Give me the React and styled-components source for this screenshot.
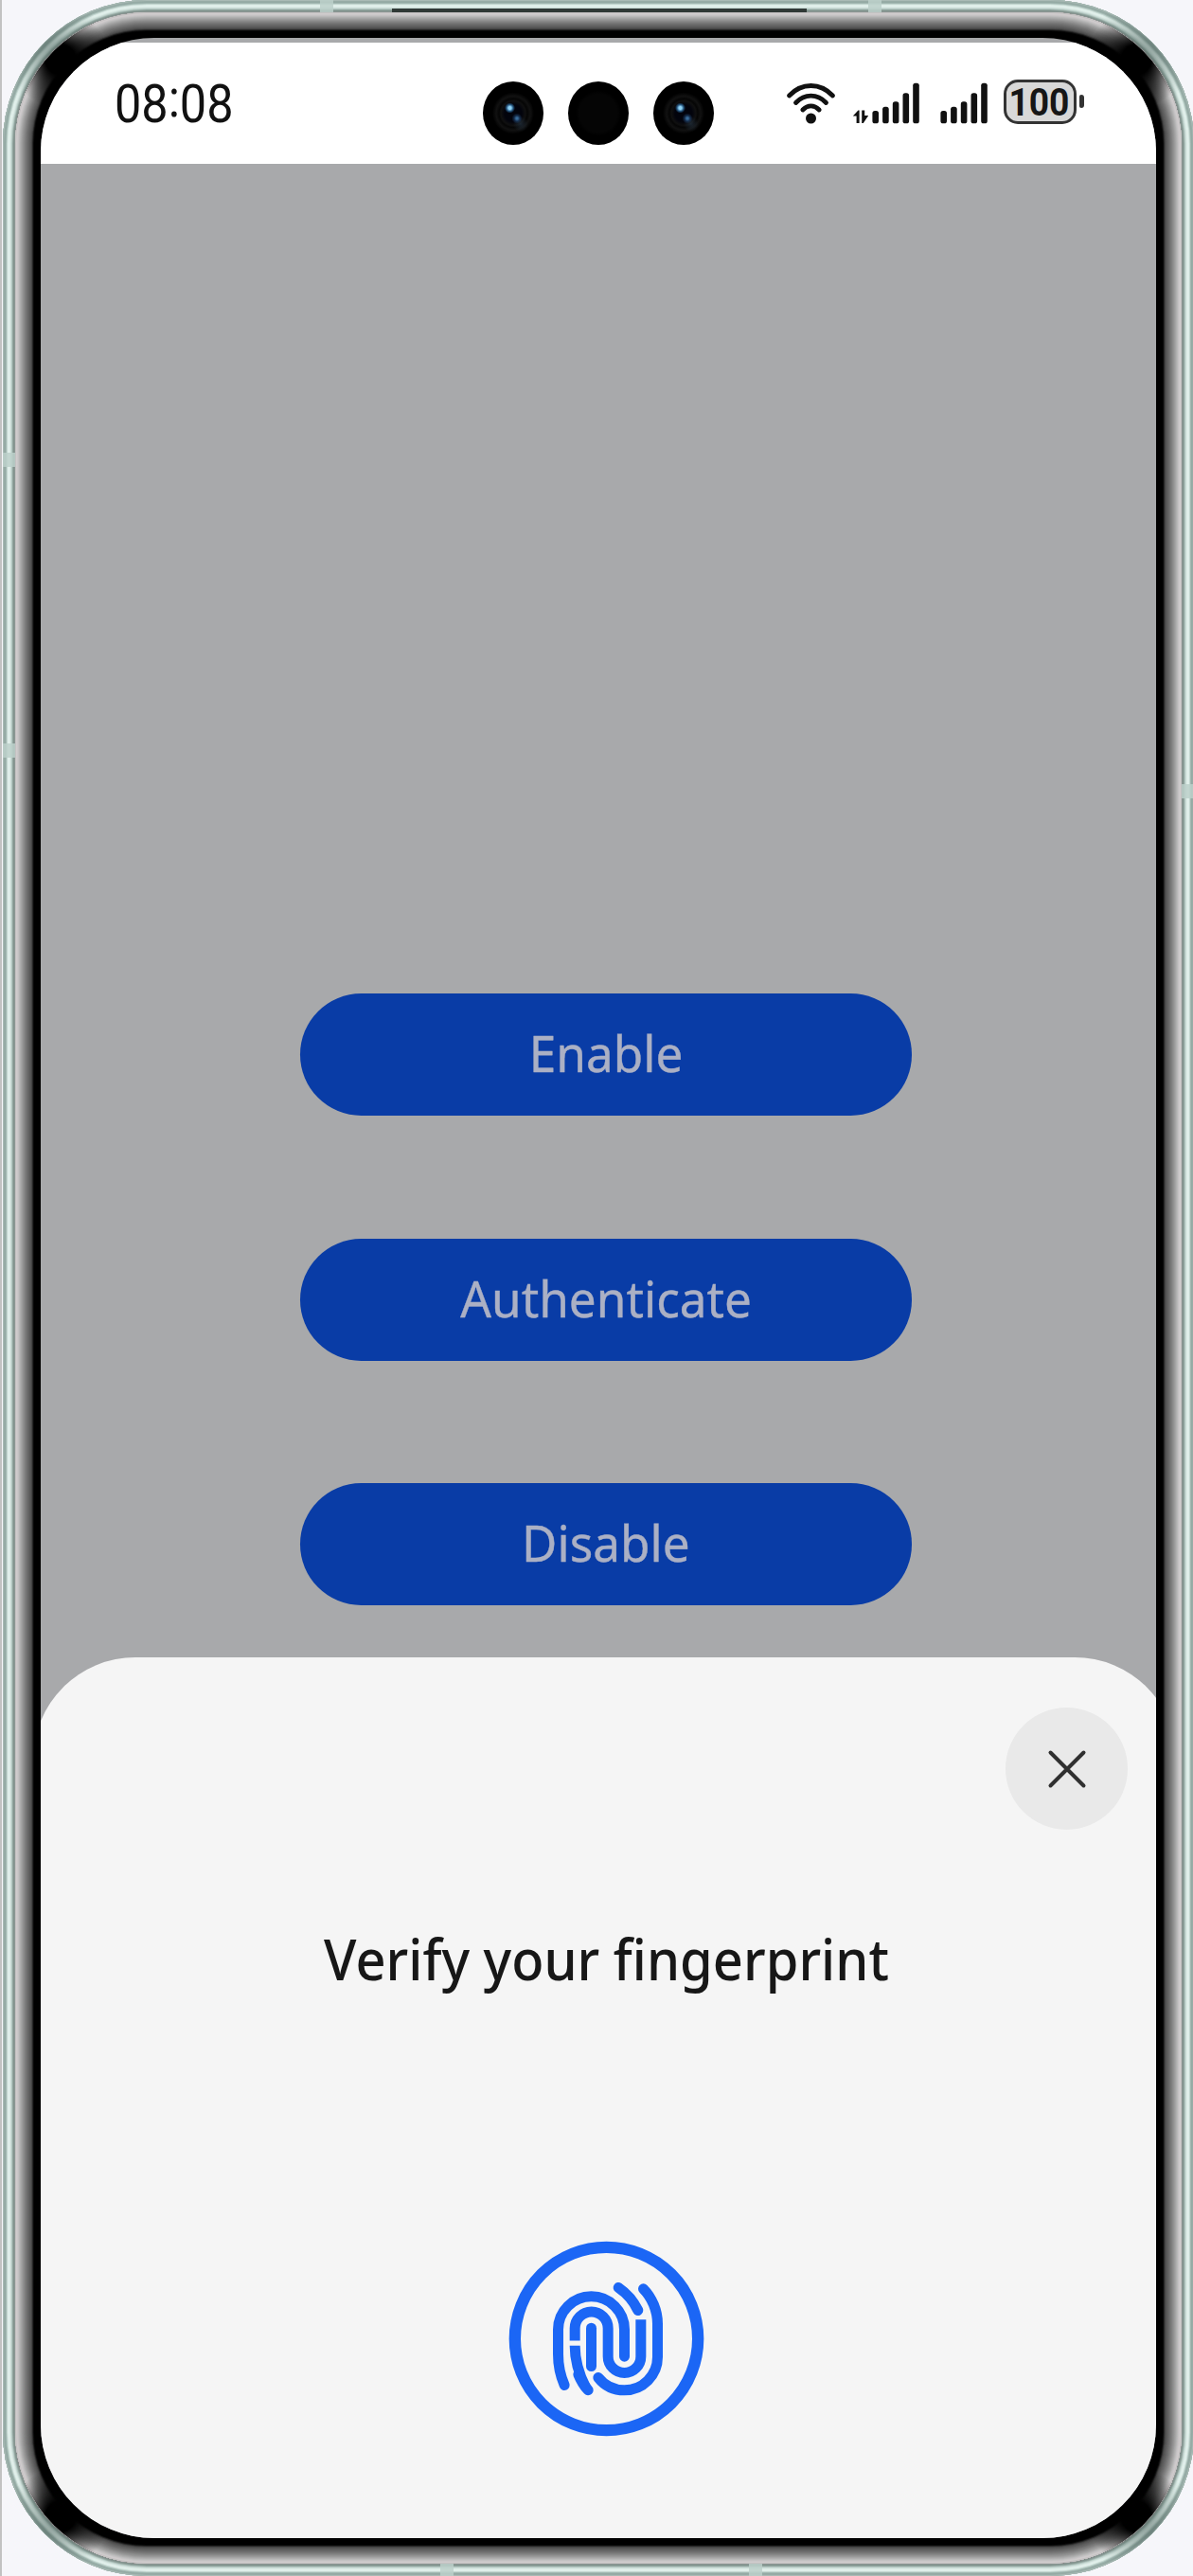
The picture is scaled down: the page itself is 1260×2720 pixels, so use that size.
import React from 'react';
import styled, { createGlobalStyle } from 'styled-components';

const GlobalStyle = createGlobalStyle`
  * { box-sizing: border-box; }
  html, body { margin: 0; background: #f6f6fa; }
  body { width: 1260px; height: 2720px; overflow: hidden; }
`;

/* Concentric one-pixel bands, listed from the outside edge inwards. */
const bands = (colors) =>
  colors.map((c, i) => `inset 0 0 0 ${i + 1}px ${c}`).join(', ');

const metal = [
  '#a9bab5', '#97aca6', '#94aaa4', '#a3b8b2', '#c3d6d0', '#deede8', '#e2f0ec',
  '#dcebe6', '#cbdcd7', '#b3c7c1', '#93a6a0', '#82938e', '#8b9693',
];

const bezel = [
  '#c4c1c2', '#d0cccd', '#cbc8c9', '#c3c1c2', '#b8b8b8', '#aeaeae', '#a4a4a4',
  '#9a9a9a', '#919191', '#888888', '#7f7f7f', '#777777', '#6f6f6f', '#686868',
  '#616161', '#5a5a5a', '#525252', '#444444', '#262626', '#0a0a0a', '#000000',
];

const Page = styled.main`
  width: 1260px;
  height: 2720px;
  display: flex;
  overflow: hidden;
  border-left: 2px solid #c2c2c2;
  background: #f6f6fa;
`;

const Frame = styled.div`
  position: relative;
  flex: none;
  width: 1258px;
  height: 2720px;
  margin-left: 1px;
  padding: 13px;
  border-radius: 152px;
  background: #8b9693;
  box-shadow: ${bands(metal)};
  overflow: hidden;

  &::before {
    content: '';
    position: absolute;
    inset: 0;
    background:
      radial-gradient(circle at 40px 42px, rgba(76, 98, 92, 0.6), transparent 62px),
      radial-gradient(circle at 1218px 42px, rgba(76, 98, 92, 0.6), transparent 62px),
      radial-gradient(circle at 40px 2678px, rgba(76, 98, 92, 0.6), transparent 62px),
      radial-gradient(circle at 1218px 2678px, rgba(76, 98, 92, 0.6), transparent 62px);
  }
`;

const Seam = styled.i`
  position: absolute;
  left: ${(p) => p.$x}px;
  top: ${(p) => p.$y}px;
  width: ${(p) => p.$w}px;
  height: ${(p) => p.$h}px;
  background: ${(p) => p.$color || 'rgba(188, 208, 202, 0.85)'};
`;

const Bezel = styled.div`
  position: relative;
  height: 100%;
  padding: 27px;
  border-radius: 139px;
  background: #000;
  box-shadow: ${bands(bezel)};
  overflow: hidden;

  &::before {
    content: '';
    position: absolute;
    inset: 0;
    background:
      radial-gradient(circle at 48px 50px, #000 16px, transparent 52px),
      radial-gradient(circle at 1184px 50px, #000 16px, transparent 52px),
      radial-gradient(circle at 48px 2644px, #000 16px, transparent 52px),
      radial-gradient(circle at 1184px 2644px, #000 16px, transparent 52px);
  }
`;

const Screen = styled.div`
  position: relative;
  display: flex;
  flex-direction: column;
  height: 100%;
  padding-top: 5px;
  overflow: hidden;
  border-radius: 120px;
  background: #a8a9ab;
`;

const StatusBar = styled.header`
  flex: none;
  display: flex;
  align-items: flex-start;
  height: 128px;
  background: #fff;
`;

const Clock = styled.time`
  width: 385px;
  margin: 32px 0 0 78px;
  font: 400 56px/66px Roboto, "Noto Sans", sans-serif;
  color: #111;
  transform: scaleX(0.9);
  transform-origin: left center;
`;

const Colon = styled.span`
  position: relative;
  top: -6px;
`;

const Cameras = styled.div`
  display: flex;
  gap: 26px;
  margin: 41px 0 0 4px;
`;

const Hole = styled.span`
  width: 64px;
  height: 67px;
  border-radius: 50%;
  background: ${(p) =>
    p.$lens
      ? `radial-gradient(circle at 28.5px 28px, #8fd2f5 0 1.5px, rgba(52, 120, 175, 0.7) 3.5px, transparent 5.5px),
         radial-gradient(circle at 36px 39px, #3a6c9b 0 1px, rgba(32, 70, 115, 0.6) 3px, transparent 5.5px),
         radial-gradient(circle at 40px 45px, rgba(40, 56, 72, 0.6), transparent 8px),
         radial-gradient(circle at 32px 33.5px, #02030c 9px, #101010 13px, #050505 15px, #111 18px, #000 22px)`
      : 'radial-gradient(circle, #050505 20px, #000 24px)'};
`;

const StatusIcons = styled.div`
  display: flex;
  align-items: flex-start;
  margin: 39px 0 0 76px;

  svg { display: block; flex: none; }
`;

const SignalIcon = styled.svg`
  margin-left: ${(p) => p.$gap}px;
`;

const Battery = styled.div`
  display: flex;
  align-items: center;
  justify-content: center;
  width: 77px;
  height: 47px;
  margin-left: 4px;
  border: 3px solid #333;
  border-radius: 15px;
  background: #d8d8d8;
`;

const BatteryLevel = styled.span`
  margin: 3px 2px 0 0;
  font: 700 40px/44px Roboto, "Noto Sans", sans-serif;
  color: #161616;
  transform: scaleX(0.93);
`;

const BatteryNub = styled.span`
  width: 5px;
  height: 14px;
  margin: 16px 0 0 3px;
  border-radius: 2px 3px 3px 2px;
  background: #333;
`;

const Actions = styled.section`
  flex: none;
  display: flex;
  flex-direction: column;
  align-items: center;
  gap: 129.5px;
  height: 1577px;
  padding: 876px 0 0 16px;
`;

const Action = styled.button`
  width: 646px;
  height: 129px;
  padding: 0 0 3px;
  border: 0;
  border-radius: 65px;
  background: #093ca6;
  color: #abb0c4;
  font: 400 53px/72px "Noto Sans", sans-serif;
`;

const ActionLabel = styled.span`
  display: inline-block;
  transform: scaleX(0.967);
  -webkit-text-stroke: 0.4px #abb0c4;
`;

const Sheet = styled.section`
  flex: none;
  display: flex;
  flex-direction: column;
  align-items: center;
  height: 930px;
  margin: 0 -22px 0 -8px;
  padding: 53px 52px 0 54px;
  border-radius: 108px 108px 0 0;
  background: #f5f5f5;
`;

const Close = styled.button`
  display: grid;
  place-items: center;
  align-self: flex-end;
  width: 129px;
  height: 129px;
  padding: 0;
  border: 0;
  border-radius: 50%;
  background: #e9e9e9;
`;

const Title = styled.h1`
  margin: 96px 0 0;
  font: 500 60px/80px "Noto Sans", sans-serif;
  color: #171717;
  white-space: nowrap;
  transform: scaleX(0.934);
`;

const FingerprintButton = styled.button`
  display: block;
  margin: 258px 0 0;
  padding: 0;
  border: 0;
  background: none;

  svg { display: block; }
`;

const Wifi = () => (
  <svg width="54" height="48" viewBox="829 84 54 48" fill="none" stroke="#111" strokeWidth="4.8" strokeLinecap="round">
    <path d="M832.5 101Q842.5 90.5 855.5 90.5T878.5 101" />
    <path d="M839.5 108.5Q846.5 101.2 855.5 101.2T871.5 108.5" />
    <path d="M846.8 116Q850.8 111.8 855.5 111.8T864.2 116" />
    <circle cx="855.5" cy="125" r="5.5" fill="#111" stroke="none" />
  </svg>
);

const tops = [33, 28.7, 23.3, 14.3, 3.7];

const Signal = ({ data }) => (
  <SignalIcon
    $gap={data ? 10 : 3}
    width={data ? 92 : 67}
    height="48"
    viewBox={data ? '-24 0 92 48' : '-1 0 67 48'}
    fill="#111"
  >
    {data && (
      <g>
        <path d="M-17.2 38.5l5.6-6h1.2V46h-3v-7.5z" />
        <path d="M-7.8 32.5h3v5.5h4l-5.4 8h-1.6z" />
      </g>
    )}
    {tops.map((t, i) => (
      <rect key={t} x={3.4 + i * 10.7} y={t} width="6.6" height={46.3 - t} rx="2.6" />
    ))}
  </SignalIcon>
);

const Fingerprint = () => (
  <svg width="207" height="207" viewBox="110.5 76.5 621 621" fill="none" stroke="#1b66f5" strokeWidth="33" strokeLinecap="butt">
    <circle cx="421" cy="387" r="290" strokeWidth="37" />
    <path strokeLinecap="round" d="M288 534C273 500 268 470 268 436V358A105 105 0 0 1 478 358V443" />
    <path d="M321 393V354A52.5 52.5 0 0 1 426 354V443A52 52 0 0 0 530 443V326" />
    <path strokeLinecap="round" d="M373 353V474" />
    <path d="M321 409C321 460 334 500 355 540" />
    <path strokeLinecap="round" d="M332 500C340 520 350 536 363 550" />
    <path strokeLinecap="round" d="M395 510C417 538 446 550 478 550A105 105 0 0 0 583 445V340C583 298 565 256 538 229" />
    <path strokeLinecap="round" d="M459 225C484 242 507 268 521 297" />
  </svg>
);

export default function App() {
  return (
    <Page>
      <GlobalStyle />
      <Frame>
        <Seam $x={335} $y={0} $w={14} $h={13} />
        <Seam $x={914} $y={0} $w={14} $h={13} />
        <Seam $x={411} $y={9} $w={438} $h={4} $color="#303936" />
        <Seam $x={0} $y={478} $w={13} $h={15} />
        <Seam $x={0} $y={785} $w={13} $h={15} />
        <Seam $x={1245} $y={828} $w={13} $h={15} />
        <Seam $x={462} $y={2707} $w={14} $h={13} />
        <Seam $x={788} $y={2707} $w={14} $h={13} />
        <Bezel>
          <Screen>
            <StatusBar>
              <Clock>08<Colon>:</Colon>08</Clock>
              <Cameras>
                <Hole $lens />
                <Hole />
                <Hole $lens />
              </Cameras>
              <StatusIcons>
                <Wifi />
                <Signal data />
                <Signal />
                <Battery><BatteryLevel>100</BatteryLevel></Battery>
                <BatteryNub />
              </StatusIcons>
            </StatusBar>
            <Actions>
              <Action><ActionLabel>Enable</ActionLabel></Action>
              <Action><ActionLabel>Authenticate</ActionLabel></Action>
              <Action><ActionLabel>Disable</ActionLabel></Action>
            </Actions>
            <Sheet>
              <Close aria-label="Close">
                <svg width="42" height="42" viewBox="0 0 42 42" stroke="#303030" strokeWidth="4" strokeLinecap="round">
                  <path d="M3.5 3.5l35 35M38.5 3.5l-35 35" />
                </svg>
              </Close>
              <Title>Verify your fingerprint</Title>
              <FingerprintButton aria-label="Fingerprint">
                <Fingerprint />
              </FingerprintButton>
            </Sheet>
          </Screen>
        </Bezel>
      </Frame>
    </Page>
  );
}
